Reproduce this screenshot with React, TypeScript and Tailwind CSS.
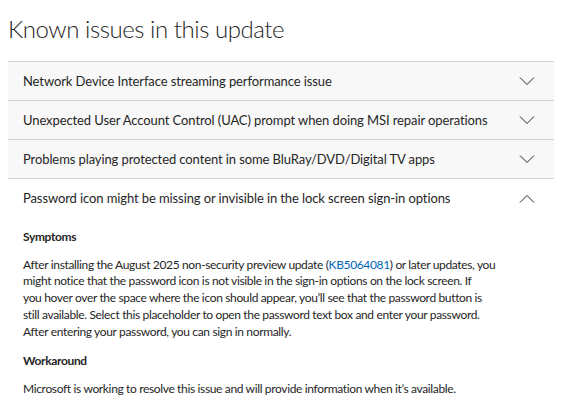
import { useState } from 'react';

const ISSUES = [
  { title: 'Network Device Interface streaming performance issue' },
  { title: 'Unexpected User Account Control (UAC) prompt when doing MSI repair operations' },
  { title: 'Problems playing protected content in some BluRay/DVD/Digital TV apps' },
  { title: 'Password icon might be missing or invisible in the lock screen sign-in options' },
];

function Chevron({ up }: { up: boolean }) {
  return (
    <svg width="16" height="9" viewBox="0 0 16 9" className="shrink-0 text-[#262626]">
      <path d={up ? 'M1 8.5 L8 1.5 L15 8.5' : 'M1 0.5 L8 7.5 L15 0.5'} fill="none" stroke="currentColor" strokeWidth="1" />
    </svg>
  );
}

export default function App() {
  const [open, setOpen] = useState<number[]>([3]);

  const toggle = (idx: number) => {
    setOpen(prev => prev.includes(idx) ? prev.filter(i => i !== idx) : [...prev, idx]);
  };

  return (
    <div className="bg-white w-[571px] h-[412px] overflow-hidden pl-2 pr-[17px] text-[#262626]" style={{ fontFamily: '"Segoe UI", Lato, sans-serif' }}>
      <h2 className="text-[24px] font-light leading-8 tracking-[-0.45px] pt-[13px] pb-[16px] text-[#262626]">Known issues in this update</h2>

      <div className="border-t border-[#d2d2d2]">
        {ISSUES.map((issue, idx) => {
          const isOpen = open.includes(idx);
          return (
            <div key={idx} className="border-b border-[#d2d2d2] last:border-b-0">
              <button
                onClick={() => toggle(idx)}
                className={`w-full h-[38px] flex items-center justify-between pl-[15px] pr-[19px] text-left ${isOpen ? 'bg-white' : 'bg-[#f8f8f8]'}`}
              >
                <span className="text-[13px] tracking-[-0.1px] pt-px">{issue.title}</span>
                <Chevron up={isOpen} />
              </button>
              {isOpen && (
                <div className="pl-[15px] pt-[12px] text-[12px] leading-[16.7px] tracking-[-0.35px] max-w-[493px]">
                  <p className="font-bold mb-[11px]">Symptoms</p>
                  <p className="mb-[13px]">
                    After installing the August 2025 non-security preview update{' '}
                    (<a href="#" className="text-[#0067b8]">KB5064081</a>) or later updates, you might notice that the password icon is not visible in the sign-in options on the lock screen. If<br />
                    you hover over the space where the icon should appear, you’ll see that the password button is<br />
                    still available. Select this placeholder to open the password text box and enter your password.<br />
                    After entering your password, you can sign in normally.
                  </p>
                  <p className="font-bold mb-[11px]">Workaround</p>
                  <p>Microsoft is working to resolve this issue and will provide information when it’s available.</p>
                </div>
              )}
            </div>
          );
        })}
      </div>
    </div>
  );
}
